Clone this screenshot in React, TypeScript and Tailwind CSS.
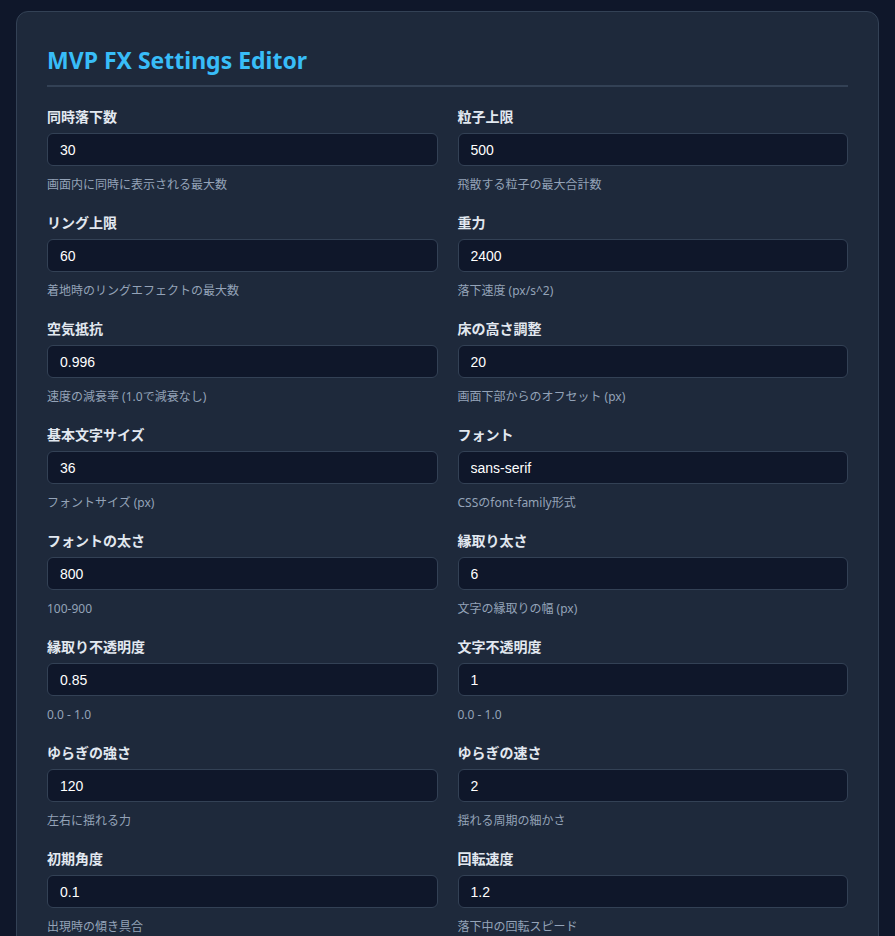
const fields = [
  { label: '同時落下数', value: '30', hint: '画面内に同時に表示される最大数' },
  { label: '粒子上限', value: '500', hint: '飛散する粒子の最大合計数' },
  { label: 'リング上限', value: '60', hint: '着地時のリングエフェクトの最大数' },
  { label: '重力', value: '2400', hint: '落下速度 (px/s^2)' },
  { label: '空気抵抗', value: '0.996', hint: '速度の減衰率 (1.0で減衰なし)' },
  { label: '床の高さ調整', value: '20', hint: '画面下部からのオフセット (px)' },
  { label: '基本文字サイズ', value: '36', hint: 'フォントサイズ (px)' },
  { label: 'フォント', value: 'sans-serif', hint: 'CSSのfont-family形式' },
  { label: 'フォントの太さ', value: '800', hint: '100-900' },
  { label: '縁取り太さ', value: '6', hint: '文字の縁取りの幅 (px)' },
  { label: '縁取り不透明度', value: '0.85', hint: '0.0 - 1.0' },
  { label: '文字不透明度', value: '1', hint: '0.0 - 1.0' },
  { label: 'ゆらぎの強さ', value: '120', hint: '左右に揺れる力' },
  { label: 'ゆらぎの速さ', value: '2', hint: '揺れる周期の細かさ' },
  { label: '初期角度', value: '0.1', hint: '出現時の傾き具合' },
  { label: '回転速度', value: '1.2', hint: '落下中の回転スピード' },
];

export default function App() {
  return (
    <div className="min-h-screen bg-[#0f172a] px-4 pt-[11px] pb-8 font-['Noto_Sans','Noto_Sans_CJK_JP',sans-serif]">
      <div className="bg-[#1e293b] border border-[#334155] rounded-xl px-[30px] pt-[32px] pb-8">
        <h1 className="text-[23px] leading-[32px] font-bold text-[#38bdf8] pb-[9px] border-b-2 border-[#334155]">
          MVP FX Settings Editor
        </h1>
        <div className="grid grid-cols-2 gap-x-5 mt-[20px]">
          {fields.map((f) => (
            <Field key={f.label} {...f} />
          ))}
        </div>
      </div>
    </div>
  );
}

function Field({ label, value, hint }: { label: string; value: string; hint: string }) {
  return (
    <div className="h-[106px]">
      <label className="block text-[14px] leading-[20px] font-bold text-[#e2e8f0] mb-[6px]">{label}</label>
      <input
        defaultValue={value}
        className="block w-full h-[33px] bg-[#0f172a] border border-[#334155] rounded-md px-3 text-[14px] text-white font-['Liberation_Sans',Arial,sans-serif] outline-none"
      />
      <p className="mt-[11px] text-[12px] leading-[16px] text-[#94a3b8]">{hint}</p>
    </div>
  );
}
